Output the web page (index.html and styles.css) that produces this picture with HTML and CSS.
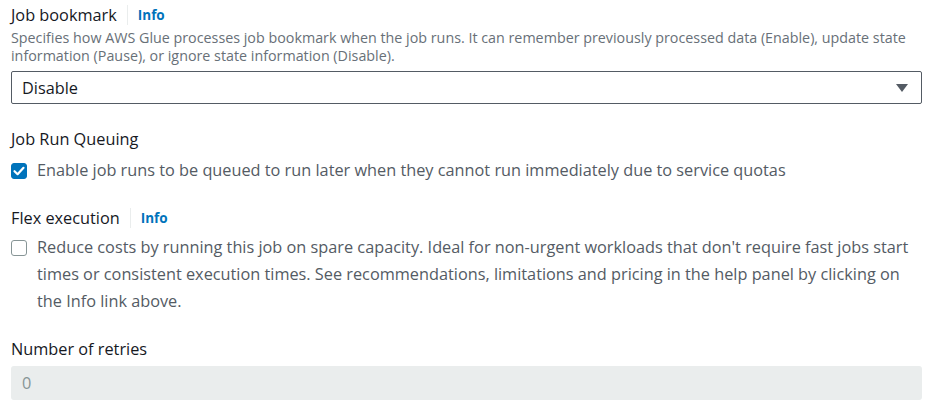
FILE: index.html
```html
<!DOCTYPE html>
<html>
<head>
<meta charset="utf-8">
<link rel="stylesheet" href="styles.css">
</head>
<body>
<div class="form">
  <div class="field">
    <div class="label-row">
      <span class="label">Job bookmark</span>
      <span class="divider"></span>
      <a class="info">Info</a>
    </div>
    <div class="desc">Specifies how AWS Glue processes job bookmark when the job runs. It can remember previously processed data (Enable), update state information (Pause), or ignore state information (Disable).</div>
    <div class="select">
      <span class="select-value">Disable</span>
      <svg class="caret" width="12" height="8" viewBox="0 0 12 8"><path d="M0 0 H12 L6 8 Z" fill="#545b64"/></svg>
    </div>
  </div>

  <div class="field field-queue">
    <div class="label-row">
      <span class="label">Job Run Queuing</span>
    </div>
    <div class="check-row">
      <span class="box checked">
        <svg width="16" height="16" viewBox="0 0 16 16"><path d="M3.5 8.2 L6.6 11.2 L12.5 4.8" fill="none" stroke="#fff" stroke-width="2.2" stroke-linecap="round" stroke-linejoin="round"/></svg>
      </span>
      <span class="check-text">Enable job runs to be queued to run later when they cannot run immediately due to service quotas</span>
    </div>
  </div>

  <div class="field field-flex">
    <div class="label-row">
      <span class="label">Flex execution</span>
      <span class="divider"></span>
      <a class="info">Info</a>
    </div>
    <div class="check-row">
      <span class="box"></span>
      <span class="check-text">Reduce costs by running this job on spare capacity. Ideal for non-urgent workloads that don't require fast jobs start times or consistent execution times. See recommendations, limitations and pricing in the help panel by clicking on the Info link above.</span>
    </div>
  </div>

  <div class="field field-retries">
    <div class="label-row">
      <span class="label">Number of retries</span>
    </div>
    <div class="input-disabled">0</div>
  </div>
</div>
</body>
</html>
```

FILE: styles.css
```css
html, body {
  margin: 0;
  padding: 0;
  background: #ffffff;
}
body {
  font-family: "Open Sans", "Noto Sans", sans-serif;
  color: #16191f;
  font-size: 14px;
}
.form {
  padding: 4px 20px 0 11px;
  display: flex;
  flex-direction: column;
}
.label-row {
  display: flex;
  align-items: center;
  height: 22px;
  line-height: 22px;
}
.label {
  font-size: 16.3px;
  color: #16191f;
}
.divider {
  width: 1px;
  height: 20px;
  background: #eaeded;
  margin: 0 10px 0 10px;
}
.info {
  color: #0073bb;
  font-weight: 700;
  font-size: 13.5px;
}
.desc {
  font-size: 14.3px;
  line-height: 18px;
  color: #687078;
  margin-top: 3px;
}
.select {
  margin-top: 6px;
  height: 33px;
  box-sizing: border-box;
  border: 1px solid #545b64;
  border-radius: 2px;
  display: flex;
  align-items: center;
  justify-content: space-between;
  padding: 0 13px 0 10px;
}
.select-value {
  font-size: 16.3px;
  color: #16191f;
}
.field-queue { margin-top: 24px; }
.check-row {
  display: flex;
  align-items: flex-start;
  margin-top: 7px;
}
.box {
  flex: none;
  width: 16px;
  height: 16px;
  box-sizing: border-box;
  border: 1px solid #879596;
  border-radius: 3px;
  margin-top: 6px;
  margin-right: 10px;
  display: flex;
}
.box.checked {
  background: #0073bb;
  border-color: #0073bb;
}
.box.checked svg { margin: -1px; }
.check-text {
  font-size: 16.3px;
  line-height: 27px;
  color: #545b64;
}
.field-flex { margin-top: 23px; }
.field-flex .check-row { margin-top: 5px; }
.field-retries { margin-top: 23px; }
.input-disabled {
  margin-top: 6px;
  height: 34px;
  box-sizing: border-box;
  background: #eaeded;
  border-radius: 3px;
  color: #879596;
  font-size: 16.3px;
  line-height: 34px;
  padding-left: 11px;
}
```
